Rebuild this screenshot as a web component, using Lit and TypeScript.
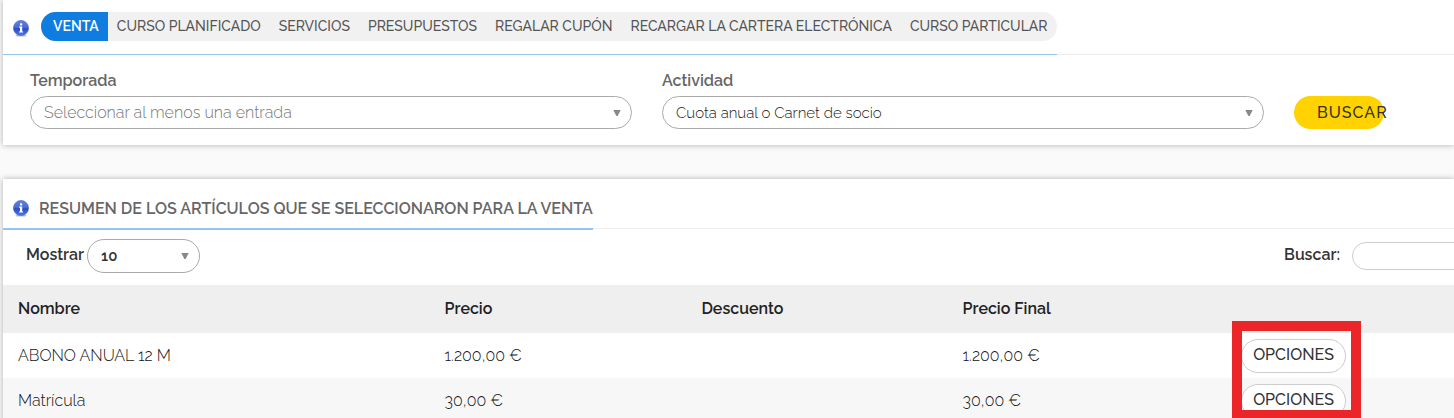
import { LitElement, html, css } from "lit";
import { customElement, property, state } from "lit/decorators.js";
import { classMap } from "lit/directives/class-map.js";

@customElement("info-icon")
class InfoIcon extends LitElement {
  static styles = css`
    :host { display: block; flex: none; width: 16px; height: 17px; }
    .icon { display: block; width: 16px; height: 17px; }
  `;
  render() {
    return html`<svg class="icon" viewBox="0 0 16 17" aria-hidden="true">
      <defs>
        <linearGradient id="ball" x1="0" y1="0" x2="0" y2="1">
          <stop offset="0" stop-color="#5f80dc" />
          <stop offset="0.45" stop-color="#4a6dd6" />
          <stop offset="0.55" stop-color="#2a4cc0" />
          <stop offset="1" stop-color="#4d7bea" />
        </linearGradient>
      </defs>
      <ellipse cx="8" cy="15.4" rx="5.5" ry="1.2" fill="#000" opacity="0.25" />
      <circle cx="8" cy="8" r="7.6" fill="url(#ball)" stroke="#4664c4" stroke-width="0.6" />
      <rect x="7" y="3.2" width="2.2" height="2.2" rx="0.6" fill="#fff" />
      <path d="M6.2 6.6h3v4.8h0.9v1.2H6v-1.2h1V7.8h-0.8z" fill="#fff" />
    </svg>`;
  }
}

@customElement("pill-select")
class PillSelect extends LitElement {
  @property() label = "";
  @property() variant = "field";
  @property({ type: Array }) options: string[] = [];
  @property({ type: Boolean }) placeholder = false;

  static styles = css`
    :host { display: block; }
    .wrap { display: block; }
    .wrap.inline { display: flex; align-items: center; gap: 3px; }
    .label {
      display: block;
      font-size: 16px;
      line-height: 20px;
      font-weight: 600;
      color: #666;
      margin-bottom: 5px;
    }
    .inline .label { margin: 0; color: #333; padding-bottom: 2px; }
    .box { position: relative; }
    .select {
      appearance: none;
      box-sizing: border-box;
      display: block;
      width: 100%;
      height: 33px;
      margin: 0;
      padding: 0 32px 0 13px;
      border: 1px solid #aaa;
      border-radius: 17px;
      background: #fff;
      color: #222;
      font: inherit;
      font-size: 15px;
      font-weight: 300;
      outline: none;
    }
    .empty .select { color: #777; font-size: 16px; }
    .inline .select { width: 113px; height: 34px; font-weight: 600; color: #333; }
    .arrow {
      position: absolute;
      right: 11px;
      top: 50%;
      width: 8px;
      height: 6px;
      margin-top: -3px;
      pointer-events: none;
    }
  `;
  render() {
    return html`<div class=${classMap({ wrap: true, inline: this.variant === "inline", empty: this.placeholder })}>
      <label class="label" for="control">${this.label}</label>
      <div class="box">
        <select class="select" id="control">
          ${this.options.map((o) => html`<option>${o}</option>`)}
        </select>
        <svg class="arrow" viewBox="0 0 8 6" aria-hidden="true"><path d="M0.3 0h7.4L4.6 6H3.4z" fill="#888" /></svg>
      </div>
    </div>`;
  }
}

const TABS = [
  "VENTA",
  "CURSO PLANIFICADO",
  "SERVICIOS",
  "PRESUPUESTOS",
  "REGALAR CUPÓN",
  "RECARGAR LA CARTERA ELECTRÓNICA",
  "CURSO PARTICULAR",
];

const ROWS = [
  { name: "ABONO ANUAL 12 M", price: "1.200,00 €", discount: "", total: "1.200,00 €", marked: true },
  { name: "Matrícula", price: "30,00 €", discount: "", total: "30,00 €", marked: false },
];

@customElement("app-root")
class AppRoot extends LitElement {
  @state() active = 0;

  static styles = css`
    :host {
      display: block;
      box-sizing: border-box;
      height: 100vh;
      overflow: hidden;
      padding-left: 3px;
      background: #fafafa;
      font-family: Raleway, Lato, sans-serif;
      font-size: 16px;
      color: #333;
    }
    .card { background: #fff; box-shadow: 0 0 6px rgba(0, 0, 0, 0.3); }
    .card + .card { margin-top: 34px; }
    .head { display: flex; border-bottom: 1px solid #ededed; }
    .lead { display: flex; align-items: center; padding-left: 10px; }
    .lead.tabs {
      gap: 12px;
      padding-top: 12px;
      padding-bottom: 13px;
      border-bottom: 1px solid #91c6f1;
      margin-bottom: -1px;
    }
    .tabs info-icon { margin-top: 4px; }
    .lead.title {
      box-sizing: border-box;
      gap: 10px;
      height: 51px;
      padding-top: 10px;
      border-bottom: 2px solid #91c6f1;
      margin-bottom: -2px;
    }
    .heading { margin: 0; font-size: 16px; line-height: 20px; font-weight: 600; color: #666; }
    .nav { display: flex; border-radius: 15px; overflow: hidden; background: #f1f1f1; white-space: nowrap; }
    .tab {
      padding: 0 9px;
      font-size: 14px;
      line-height: 29px;
      font-weight: 500;
      color: #555;
      text-decoration: none;
    }
    .tab:first-child { padding-left: 12px; }
    .tab.on { background: #0e7ddf; color: #fff; font-weight: 600; }
    .form {
      display: grid;
      grid-template-columns: 1fr 1fr 90px;
      gap: 30px;
      align-items: end;
      padding: 16px 70px 16px 27px;
    }
    .search {
      height: 33px;
      margin: 0;
      padding: 0 0 0 23px;
      border: 0;
      border-radius: 17px;
      background: #ffd200;
      color: #333;
      font: inherit;
      font-weight: 500;
      letter-spacing: 1px;
      text-align: left;
      white-space: nowrap;
    }
    .tools {
      display: flex;
      justify-content: space-between;
      align-items: center;
      box-sizing: border-box;
      height: 56px;
      overflow: hidden;
      padding-left: 23px;
      padding-bottom: 3px;
    }
    .find { display: flex; align-items: center; gap: 12px; margin-right: -58px; flex: none; }
    .find-label { font-weight: 600; line-height: 20px; padding-bottom: 2px; color: #333; }
    .find-input {
      box-sizing: border-box;
      width: 160px;
      height: 28px;
      margin: 0;
      padding: 0 14px;
      border: 1px solid #ccc;
      border-radius: 14px;
      background: #fff;
      font: inherit;
    }
    .grid { width: 100%; table-layout: fixed; border-collapse: collapse; text-align: left; }
    .c-name { width: 29.4%; }
    .c-price { width: 17.7%; }
    .c-disc { width: 18%; }
    .c-total { width: 19.2%; }
    .th { box-sizing: border-box; height: 48px; padding: 0 0 2px 15px; background: #efefef; font-weight: 600; color: #222; }
    .td {
      height: 45px;
      padding: 0 0 0 15px;
      font-weight: 300;
      font-variant-ligatures: none;
      font-feature-settings: "onum" 1, "lnum" 0, "case" 0, "calt" 0;
      color: #111;
      position: relative;
    }
    .row:nth-child(even) { background: #f7f7f7; }
    .option {
      display: block;
      height: 34px;
      margin: 0;
      padding: 0 11px 2px;
      border: 1px solid #ccc;
      border-radius: 17px;
      background: #fff;
      color: #333;
      font: inherit;
      font-weight: 500;
    }
    .mark {
      position: absolute;
      left: 6px;
      top: -12px;
      box-sizing: border-box;
      width: 129px;
      height: 99px;
      border: 10px solid #ec2529;
      z-index: 1;
      pointer-events: none;
    }
  `;

  render() {
    return html`
      <section class="card">
        <div class="head">
          <div class="lead tabs">
            <info-icon></info-icon>
            <nav class="nav">
              ${TABS.map(
                (t, i) => html`<a href="#" class=${classMap({ tab: true, on: i === this.active })}
                  @click=${(e: Event) => { e.preventDefault(); this.active = i; }}>${t}</a>`
              )}
            </nav>
          </div>
        </div>
        <form class="form" @submit=${(e: Event) => e.preventDefault()}>
          <pill-select label="Temporada" placeholder .options=${["Seleccionar al menos una entrada"]}></pill-select>
          <pill-select label="Actividad" .options=${["Cuota anual o Carnet de socio"]}></pill-select>
          <button class="search" type="submit">BUSCAR</button>
        </form>
      </section>
      <section class="card">
        <div class="head">
          <div class="lead title">
            <info-icon></info-icon>
            <h2 class="heading">RESUMEN DE LOS ARTÍCULOS QUE SE SELECCIONARON PARA LA VENTA</h2>
          </div>
        </div>
        <div class="tools">
          <pill-select variant="inline" label="Mostrar" .options=${["10", "25", "50"]}></pill-select>
          <div class="find">
            <label class="find-label" for="find">Buscar:</label>
            <input class="find-input" id="find" type="text" />
          </div>
        </div>
        <table class="grid">
          <colgroup><col class="c-name" /><col class="c-price" /><col class="c-disc" /><col class="c-total" /><col /></colgroup>
          <thead>
            <tr><th class="th">Nombre</th><th class="th">Precio</th><th class="th">Descuento</th><th class="th">Precio Final</th><th class="th"></th></tr>
          </thead>
          <tbody>
            ${ROWS.map(
              (r) => html`<tr class="row">
                <td class="td">${r.name}</td>
                <td class="td">${r.price}</td>
                <td class="td">${r.discount}</td>
                <td class="td">${r.total}</td>
                <td class="td"><button class="option" type="button">OPCIONES</button>${r.marked ? html`<div class="mark"></div>` : ""}</td>
              </tr>`
            )}
          </tbody>
        </table>
      </section>
    `;
  }
}
